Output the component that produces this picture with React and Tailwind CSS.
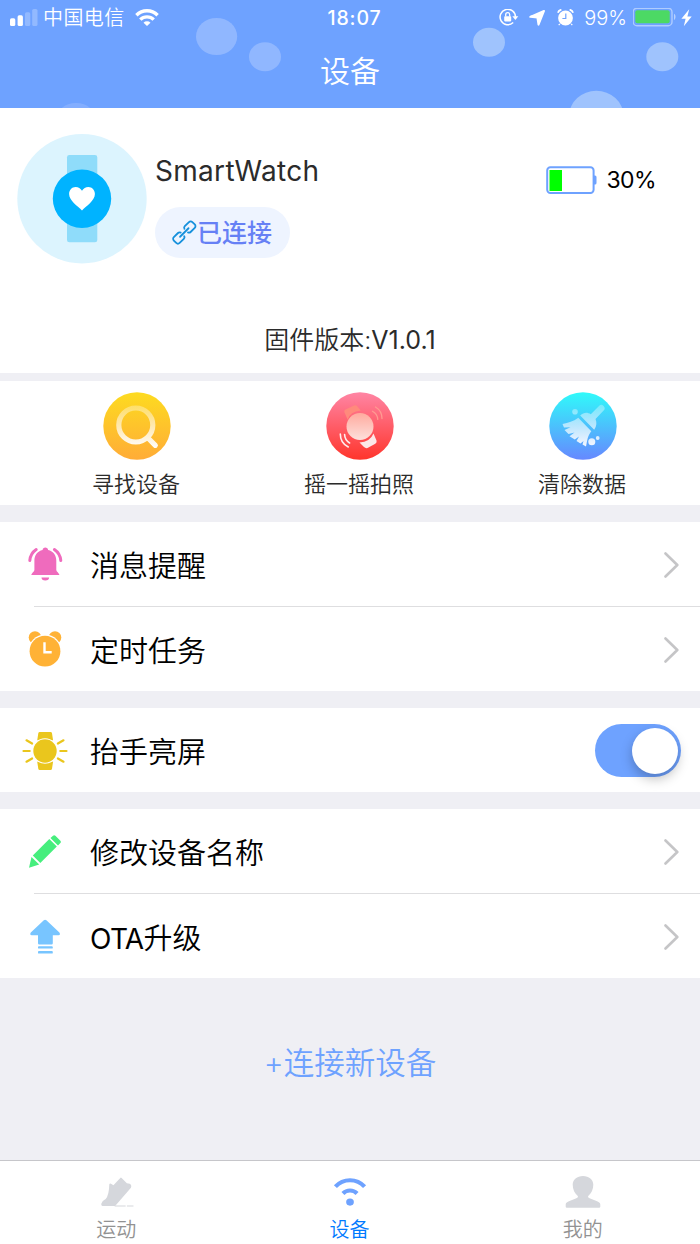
import { useId, useState } from 'react'

// ---------- Status bar icons ----------

function SignalBars() {
  return (
    <svg className="w-7 h-[18px]" viewBox="0 0 28 18" fill="#fff">
      <rect x="0" y="9.3" width="5.3" height="7.7" rx="1.6" />
      <rect x="7.6" y="6.3" width="5.3" height="10.7" rx="1.6" />
      <rect x="15" y="3.3" width="5.3" height="13.7" rx="1.6" opacity="0.25" />
      <rect x="22.2" y="0" width="5.3" height="17" rx="1.6" opacity="0.25" />
    </svg>
  )
}

function WifiIcon() {
  return (
    <svg className="w-6 h-[18px]" viewBox="0 0 24 18" fill="none" stroke="#fff" strokeWidth="3.4">
      <path d="M1.4 6.2a15 15 0 0 1 21.2 0" />
      <path d="M5.3 10.6a9.5 9.5 0 0 1 13.4 0" />
      <path d="M12 17L8.5 13.7a5 5 0 0 1 7 0z" fill="#fff" stroke="none" />
    </svg>
  )
}

function RotationLock() {
  return (
    <svg className="w-5 h-[18px]" viewBox="0 0 20 18" fill="none">
      <path d="M14.2 13.500a7.700 7.700 0 1 1 2.300-5.500" stroke="#fff" strokeWidth="1.5" />
      <path d="M13.3 7.3h6l-2.9 3.7z" fill="#fff" />
      <rect x="5.2" y="7.2" width="7" height="5.2" rx="0.8" fill="#fff" />
      <path d="M6.7 7.500V5.700a2 2 0 0 1 4 0v1.800" stroke="#fff" strokeWidth="1.3" />
    </svg>
  )
}

function LocationArrow() {
  return (
    <svg className="w-4 h-4" viewBox="0 0 16 16" fill="#fff">
      <path d="M15 1L9.500 14.600 8.400 7.600 1.300 6.800z" stroke="#fff" strokeWidth="2" strokeLinejoin="round" />
    </svg>
  )
}

function StatusAlarm() {
  return (
    <svg className="w-[17px] h-[18px]" viewBox="0 0 17 18" fill="none">
      <circle cx="8.5" cy="9" r="7.4" fill="#fff" />
      <path d="M.9 3.800A4.6 4.6 0 0 1 4.400.6M16.100 3.800a4.600 4.600 0 0 0-3.500-3.200" stroke="#fff" strokeWidth="1.7" />
      <path d="M2.800 14.800l-1.100 1.300M14.200 14.800l1.100 1.300" stroke="#fff" strokeWidth="1.2" />
      <path d="M8.800 4.600v4.900H5.400" stroke="#6ea2ff" strokeWidth="1.2" />
    </svg>
  )
}

function StatusBattery() {
  return (
    <svg className="w-11 h-5" viewBox="0 0 44 20" fill="none">
      <rect x="0.2" y="0.2" width="38.8" height="17.5" rx="3.8" stroke="#fff" strokeOpacity="0.45" strokeWidth="1.4" />
      <rect x="2.3" y="2.3" width="34.4" height="13" rx="2" fill="#4cd964" />
      <path d="M41 5.800c2 .8 2 5.400 0 6.200z" fill="#fff" fillOpacity="0.5" />
    </svg>
  )
}

function Bolt() {
  return (
    <svg className="w-[11px] h-[18px]" viewBox="0 0 11 18" fill="#fff">
      <path d="M8.200.2L.4 9.700h4.200L2.800 17.200l7.900-9.600H6.400z" />
    </svg>
  )
}

// ---------- Header ----------

function HeaderBubbles() {
  return (
    <svg className="absolute inset-0 w-full h-full" viewBox="0 0 700 108">
      <g fill="#90b7ff">
        <ellipse cx="216.6" cy="36.5" rx="20.6" ry="18.6" />
        <ellipse cx="265" cy="56.7" rx="16" ry="14.5" />
        <ellipse cx="76" cy="121.5" rx="20.6" ry="18.6" fill="#83aeff" />
      </g>
      <g fill="#9fc3fd">
        <ellipse cx="489" cy="42.3" rx="16" ry="14.5" />
        <ellipse cx="662.3" cy="56.7" rx="16" ry="14.5" />
        <ellipse cx="596.3" cy="115.3" rx="27" ry="24.5" />
      </g>
    </svg>
  )
}

function Header() {
  return (
    <header className="relative h-[108px] shrink-0 bg-[#6ea2ff] text-white">
      <HeaderBubbles />
      <div className="relative grid grid-cols-[1fr_auto_1fr] items-center h-9 pl-2.5 pr-2">
        <div className="flex items-center">
          <SignalBars />
          <span className="ml-[5px] mr-[10px] text-[20px] leading-[34px] tracking-[0.4px] font-[350]">中国电信</span>
          <WifiIcon />
        </div>
        <span className="pt-px text-[19.5px] font-medium tracking-[0.9px] ml-[7px]">18:07</span>
        <div className="flex items-center justify-end">
          <RotationLock />
          <span className="ml-2.5"><LocationArrow /></span>
          <span className="ml-3"><StatusAlarm /></span>
          <span className="ml-2.5 mr-1.5 text-[20px] leading-9 font-[350]">99%</span>
          <StatusBattery />
          <span className="ml-1"><Bolt /></span>
        </div>
      </div>
      <h1 className="relative text-center text-[30px] leading-[70px] font-[350]">设备</h1>
    </header>
  )
}

// ---------- Device card ----------

function WatchAvatar() {
  return (
    <svg className="w-[130px] h-[130px] shrink-0" viewBox="0 0 130 130">
      <circle cx="65" cy="64.7" r="64.7" fill="#dcf4fe" />
      <rect x="50" y="21" width="30.3" height="87.3" rx="2.4" fill="#8fdcfa" />
      <circle cx="65" cy="64.7" r="29.2" fill="#00b3ff" />
      <path
        d="M65 76.500C61 72.300 52.100 66.800 52.100 60.100c0-4.200 3-7 6.500-7 2.700 0 5 1.400 6.400 3.700 1.400-2.300 3.700-3.700 6.400-3.700 3.500 0 6.500 2.800 6.500 7 0 6.700-8.900 12.200-12.900 16.400z"
        fill="#fff"
      />
    </svg>
  )
}

function LinkIcon() {
  return (
    <svg className="w-[25px] h-[25px]" viewBox="0 0 25 25" fill="none" stroke="#1590dc" strokeWidth="1.8" strokeLinecap="round" strokeLinejoin="round">
      <g transform="translate(-.2 0) rotate(-45 12.500 12.500)">
        <path d="M9.800 10a2.200 2.200 0 0 0-2.100-1.600H1.800a2.400 2.400 0 0 0-2.400 2.400v3.400a2.400 2.400 0 0 0 2.400 2.400h5.900a2.200 2.200 0 0 0 2.100-1.600" />
        <path d="M15.200 10a2.200 2.200 0 0 1 2.100-1.600h5.900a2.400 2.400 0 0 1 2.400 2.400v3.400a2.400 2.400 0 0 1-2.400 2.400h-5.900a2.200 2.200 0 0 1-2.100-1.600" />
        <path d="M6.500 12.500h12" />
      </g>
    </svg>
  )
}

function WatchBattery() {
  return (
    <svg className="w-[51px] h-7" viewBox="0 0 51 28">
      <rect x="1.2" y="1.2" width="46.4" height="25.8" rx="3.2" fill="#fff" stroke="#6ea2ff" strokeWidth="2" />
      <rect x="3.5" y="4" width="12.5" height="21" fill="#00ff00" />
      <path d="M48 9.500h1a1.500 1.500 0 0 1 1.500 1.500v6a1.500 1.500 0 0 1-1.500 1.500h-1z" fill="#6ea2ff" />
    </svg>
  )
}

function DeviceCard() {
  return (
    <section className="flex flex-col justify-between h-[265px] shrink-0 bg-white pt-[26px] pb-3.5">
      <div className="flex pl-[17px] pr-[44px]">
        <WatchAvatar />
        <div className="ml-2 flex flex-col items-start">
          <span className="mt-4 text-[28px] leading-[42px] tracking-[0.3px] text-[#2b2b2b]">SmartWatch</span>
          <span className="mt-[15px] flex items-center h-[51px] w-[135px] pl-[17px] rounded-full bg-[#eef4ff] text-[25px] font-medium text-[#6680f5]">
            <LinkIcon />
            <span className="pt-[3px]">已连接</span>
          </span>
        </div>
        <div className="ml-auto mt-8 flex items-center gap-[9px] h-7">
          <WatchBattery />
          <span className="pt-px text-[23px] tracking-[-0.6px] text-black">30%</span>
        </div>
      </div>
      <p className="text-center text-[25px] leading-[38px] font-[350] text-[#2b2b2b]">
        固件版本:<span className="font-normal">V1.0.1</span>
      </p>
    </section>
  )
}

// ---------- Quick actions ----------

function FindIcon() {
  const id = useId()
  return (
    <svg className="w-[68px] h-[68px]" viewBox="0 0 68 68" fill="none">
      <defs>
        <linearGradient id={`${id}bg`} x1="0" y1="0" x2="0" y2="1">
          <stop stopColor="#fddb20" />
          <stop offset="1" stopColor="#ffac37" />
        </linearGradient>
        <linearGradient id={`${id}fg`} gradientUnits="userSpaceOnUse" x1="0" y1="13" x2="0" y2="54">
          <stop stopColor="#fff" stopOpacity="0.3" />
          <stop offset="1" stopColor="#fff" stopOpacity="0.95" />
        </linearGradient>
      </defs>
      <circle cx="34" cy="34" r="33.7" fill={`url(#${id}bg)`} />
      <path
        d="M45.500 46.500L52.300 53.300M49.800 33a17 17 0 1 1-34 0 17 17 0 0 1 34 0z"
        stroke={`url(#${id}fg)`}
        strokeWidth="5.2"
        strokeLinecap="round"
      />
    </svg>
  )
}

function ShakeIcon() {
  const id = useId()
  return (
    <svg className="w-[68px] h-[68px]" viewBox="0 0 68 68" fill="none">
      <defs>
        <linearGradient id={`${id}bg`} x1="0" y1="0" x2="0" y2="1">
          <stop stopColor="#ff85a4" />
          <stop offset="1" stopColor="#ff352c" />
        </linearGradient>
        <linearGradient id={`${id}face`} x1="0" y1="0" x2="0" y2="1">
          <stop stopColor="#ffaa9e" />
          <stop offset="1" stopColor="#fde0dc" />
        </linearGradient>
      </defs>
      <circle cx="34" cy="34" r="33.7" fill={`url(#${id}bg)`} />
      <path d="M18.500 20.500Q17.500 18.500 19.500 17.500L28 13.500Q30 12.800 31.200 14.200L34.800 18.500Q24 19.500 21.700 27.700z" fill="#ff8a7c" />
      <path d="M33.500 50.500Q44 50 47.500 41.500L50.500 48.500Q51.300 50.500 49.300 51.800L41.500 56Q39.500 56.500 38 55z" fill="#fce8e8" />
      <circle cx="34" cy="34.5" r="13.5" fill={`url(#${id}face)`} />
      <path d="M46.500 19.200a10 10 0 0 1 5.300 8.200M49.500 15a13.500 13.500 0 0 1 6.500 11.500" stroke="#ff9a91" strokeWidth="1.3" strokeLinecap="round" />
      <path d="M18.600 42.500a10.500 10.500 0 0 0 5 8.500M14.300 42a14.500 14.500 0 0 0 8 13" stroke="#fff" strokeOpacity="0.9" strokeWidth="1.6" strokeLinecap="round" />
    </svg>
  )
}

function CleanIcon() {
  const id = useId()
  return (
    <svg className="w-[68px] h-[68px]" viewBox="0 0 68 68" fill="none">
      <defs>
        <linearGradient id={`${id}bg`} x1="0" y1="0" x2="0" y2="1">
          <stop stopColor="#30fafa" />
          <stop offset="1" stopColor="#6688ff" />
        </linearGradient>
        <linearGradient id={`${id}fg`} gradientUnits="userSpaceOnUse" x1="0" y1="13" x2="0" y2="54">
          <stop stopColor="#fff" stopOpacity="0.3" />
          <stop offset="1" stopColor="#fff" stopOpacity="0.92" />
        </linearGradient>
      </defs>
      <circle cx="34" cy="34" r="33.7" fill={`url(#${id}bg)`} />
      <g fill={`url(#${id}fg)`}>
        <path d="M31.200 23.600C35 19.800 38.500 20.300 41.800 22.200L50 14a3.200 3.200 0 0 1 4.600 4.600L46.500 27c1.500 3.500 1.200 7.200-1.300 10.800z" />
        <path d="M29.300 25.800L42.300 39.300C38.500 43.500 38.300 49 37 54.500L33.500 52.500 34.500 49 31.500 51.500 27.500 49 30 44.500 25.800 47.500 20.500 44.300 25.500 40.500 19.500 42 15.500 38 21.500 35.200 15 35.500 13.500 32C19.500 31 24 29.500 29.300 25.800z" />
        <circle cx="26" cy="19.8" r="2.8" />
        <circle cx="42.8" cy="49.7" r="3.5" />
        <circle cx="48.7" cy="46" r="1.9" />
      </g>
    </svg>
  )
}

const quickActions = [
  { label: '寻找设备', Icon: FindIcon },
  { label: '摇一摇拍照', Icon: ShakeIcon },
  { label: '清除数据', Icon: CleanIcon },
]

function QuickActions() {
  return (
    <section className="flex shrink-0 h-[124px] mt-2 pl-[25px] pr-1.5 bg-white">
      {quickActions.map(({ label, Icon }) => (
        <button key={label} type="button" className="flex-1 flex flex-col items-center pt-[11px]">
          <Icon />
          <span className="mt-2 -ml-px text-[22px] leading-8 font-[350] text-[#2b2b2b]">{label}</span>
        </button>
      ))}
    </section>
  )
}

// ---------- Settings rows ----------

function BellIcon() {
  return (
    <svg className="w-[46px] h-10" viewBox="0 0 46 40" fill="#ef6bbd">
      <path d="M23.300 2.600c1.500 0 2.600.9 2.800 2.300 5.300 1.300 8.200 5.300 8.200 10.600v9.500c0 1.600 2.800 3 3.200 5.100H9.200c.4-2.100 3.200-3.500 3.200-5.100v-9.500c0-5.300 2.900-9.300 8.200-10.600.2-1.400 1.200-2.300 2.700-2.300z" />
      <path d="M19.500 32.600h7.600a3.800 2.900 0 0 1-7.600 0z" />
      <path d="M14.200 4.500Q8.500 8.300 7.800 15.500M32.400 4.500q5.700 3.800 6.400 11" fill="none" stroke="#ef6bbd" strokeWidth="3" strokeLinecap="round" />
    </svg>
  )
}

function ClockIcon() {
  return (
    <svg className="w-[46px] h-10" viewBox="0 0 46 40" fill="#ffb236">
      <circle cx="13" cy="7.5" r="6.3" />
      <circle cx="33" cy="7.5" r="6.3" />
      <circle cx="23" cy="21.2" r="16.7" fill="#fff" />
      <circle cx="23" cy="21.2" r="15.4" />
      <path d="M22.500 12.200v10h7.200" fill="none" stroke="#fff" strokeWidth="2.4" />
    </svg>
  )
}

function WristIcon() {
  return (
    <svg className="w-[46px] h-10" viewBox="0 0 46 40" fill="#eac61d">
      <path d="M17.800 1h10.700q1.300 0 1.500 1.300l1.100 7.200H15.200l1.100-7.200Q16.500 1 17.800 1zM17.800 39h10.700q1.300 0 1.500-1.300l1.100-7.200H15.200l1.100 7.200q.2 1.300 1.500 1.300z" />
      <circle cx="23" cy="20" r="12.8" fill="#fff" />
      <circle cx="23" cy="20" r="11.7" />
      <path
        d="M1.500 20h6.200M38.300 20h6.200M4.500 9.300l5.600 3.200M41.500 9.300l-5.600 3.200M4.500 30.700l5.600-3.200M41.500 30.700l-5.600-3.200"
        stroke="#eac61d"
        strokeWidth="2.2"
        strokeLinecap="round"
      />
    </svg>
  )
}

function PencilIcon() {
  return (
    <svg className="w-[46px] h-10" viewBox="0 0 46 40" fill="#46ee7d">
      <path d="M28.500 6L31 3.700q1.200-1.100 2.400 0l5 5q1.200 1.200 0 2.400L36 13.500z" />
      <path d="M27.300 7.100L34.800 14.600 18.300 31 10.800 23.500z" />
      <path d="M9.500 24.900L17.200 32.600 7 35.700z" />
    </svg>
  )
}

function UpgradeIcon() {
  return (
    <svg className="w-[46px] h-10" viewBox="0 0 46 40" fill="#78c5ff">
      <path d="M21.800 3.200q1.300-1.100 2.600 0L37.400 15.500Q38.800 18 36.500 18.200H30.800v8q0 1.200-1.200 1.200H17.200q-1.200 0-1.200-1.200v-8H9.700Q7.400 18 8.800 15.500z" />
      <rect x="16" y="29.3" width="14.8" height="2.3" rx="0.9" />
      <rect x="16" y="34" width="14.8" height="2.6" rx="0.9" />
    </svg>
  )
}

function Chevron() {
  return (
    <svg className="w-4 h-7" viewBox="0 0 16 28" fill="none" stroke="#c5c5c7" strokeWidth="2.6" strokeLinecap="round" strokeLinejoin="round">
      <path d="M1.500 2.500L13.300 14 1.500 25.500" />
    </svg>
  )
}

function Toggle({ checked, onChange }) {
  return (
    <button
      type="button"
      role="switch"
      aria-checked={checked}
      onClick={() => onChange(!checked)}
      className={`flex items-center w-[86px] h-[53px] px-[3px] rounded-full ${checked ? 'justify-end bg-[#6ea2ff]' : 'justify-start bg-[#e5e5ea]'}`}
    >
      <span className="w-[46px] h-[46px] rounded-full bg-white shadow-[0_5px_12px_rgba(0,0,0,0.25)]" />
    </button>
  )
}

function Row({ Icon, label, children }) {
  return (
    <div className="flex items-center h-[84px] pt-px pl-[22px] pr-[19px]">
      <Icon />
      <span className="ml-[22px] pt-1 text-[29px] leading-[42px] font-[350] text-black">{label}</span>
      <div className="ml-auto">{children ?? <div className="pr-px"><Chevron /></div>}</div>
    </div>
  )
}

function Group({ className = '', children }) {
  return <section className={`shrink-0 bg-white ${className}`}>{children}</section>
}

function Divider() {
  return <div className="ml-[34px] h-px bg-[#dedee0]" />
}

// ---------- Tab bar ----------

function ShoeIcon() {
  return (
    <svg className="w-9 h-[34px]" viewBox="0 0 36 34" fill="#d5d7dc">
      <path d="M9.800 9q.4-1.400 1.800-.7l2.600 1.400L21.500 2q.7-.6 1.400 0L28.500 7.600l3 .7q2.500 1.700 1.300 4.200L16 31.800H2.600q-1.800-.2-1.300-2.300Q2.200 26 6 24.500 9.600 20 9.800 9z" />
      <path d="M15.500 31.300h11.700v1.100H15.500zM28.500 31.300h7v1.100h-7z" />
    </svg>
  )
}

function DeviceTabIcon() {
  return (
    <svg className="w-9 h-[34px]" viewBox="0 0 36 34" fill="none" stroke="#6ea2ff">
      <path d="M2.500 11.300a21 21 0 0 1 31 0" strokeWidth="4.4" />
      <path d="M10.500 18.600a10.500 10.500 0 0 1 15 0" strokeWidth="4.4" />
      <ellipse cx="18" cy="27.7" rx="4.1" ry="3.8" fill="#6ea2ff" stroke="none" />
    </svg>
  )
}

function PersonIcon() {
  return (
    <svg className="w-9 h-[34px]" viewBox="0 0 36 38" preserveAspectRatio="none" fill="#d5d7dc">
      <path d="M18 0c6 0 10.300 4.300 10.300 10.500 0 5.500-2 10.500-5.100 13.200-.5 1.500.3 2.300 2 3.100l6.300 3c2.200 1 3.800 2.200 3.800 4v2.700q0 1.200-1.200 1.200H1.900q-1.200 0-1.200-1.200v-2.700c0-1.800 1.600-3 3.800-4l6.300-3c1.700-.8 2.500-1.600 2-3.100-3.100-2.700-5.100-7.700-5.100-13.200C7.700 4.300 12 0 18 0z" />
    </svg>
  )
}

const tabs = [
  { label: '运动', Icon: ShoeIcon },
  { label: '设备', Icon: DeviceTabIcon, active: true },
  { label: '我的', Icon: PersonIcon },
]

function TabBar() {
  return (
    <nav className="flex shrink-0 h-[84px] border-t border-[#c6c6ca] bg-white">
      {tabs.map(({ label, Icon, active }) => (
        <button key={label} type="button" className="flex-1 flex flex-col items-center pt-[15px]">
          <Icon />
          <span className={`mt-2 -ml-px text-[20px] leading-7 font-[350] ${active ? 'text-[#007aff]' : 'text-[#929292]'}`}>{label}</span>
        </button>
      ))}
    </nav>
  )
}

export default function App() {
  const [raiseToWake, setRaiseToWake] = useState(true)

  return (
    <div className="flex flex-col w-[700px] h-[1244px] overflow-hidden bg-[#efeff4] font-[Inter,'Noto_Sans_CJK_SC',sans-serif]">
      <Header />
      <DeviceCard />
      <QuickActions />

      <Group className="mt-[17px]">
        <Row Icon={BellIcon} label="消息提醒" />
        <Divider />
        <Row Icon={ClockIcon} label="定时任务" />
      </Group>

      <Group className="mt-[17px]">
        <Row Icon={WristIcon} label="抬手亮屏">
          <Toggle checked={raiseToWake} onChange={setRaiseToWake} />
        </Row>
      </Group>

      <Group className="mt-[17px]">
        <Row Icon={PencilIcon} label="修改设备名称" />
        <Divider />
        <Row
          Icon={UpgradeIcon}
          label={<><span className="text-[28px] font-normal tracking-[-0.7px]">OTA</span>升级</>}
        />
      </Group>

      <div className="flex-1 flex items-center justify-center pb-3">
        <button type="button" className="text-[30.5px] leading-none font-[350] text-[#6ea2ff]">+连接新设备</button>
      </div>

      <TabBar />
    </div>
  )
}
